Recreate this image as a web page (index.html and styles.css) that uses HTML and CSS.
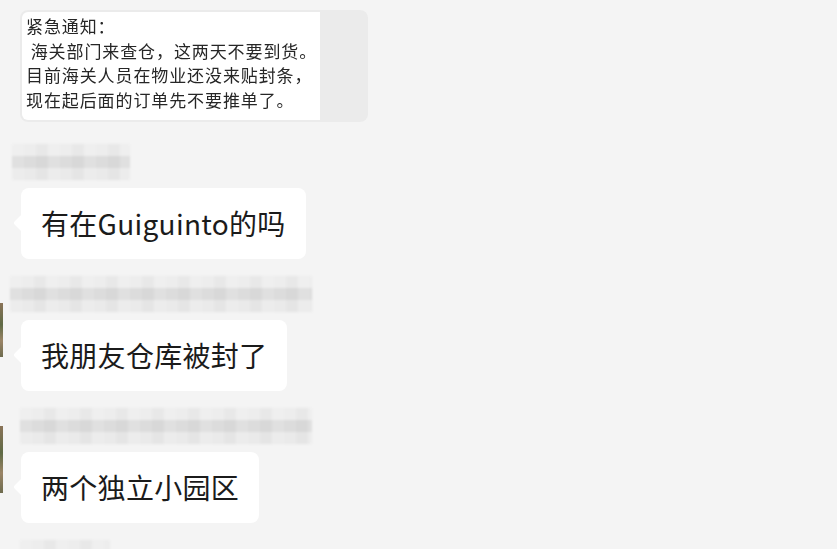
FILE: index.html
```html
<!DOCTYPE html>
<html lang="zh-CN">
<head>
  <meta charset="UTF-8" />
  <title>聊天记录</title>
  <link rel="stylesheet" href="styles.css">
</head>
<body>
  <div class="chat">
    <div class="pic-msg">
      <div class="pic">
        <div class="pic-line">紧急通知：</div>
        <div class="pic-line"> 海关部门来查仓，这两天不要到货。</div>
        <div class="pic-line">目前海关人员在物业还没来贴封条，</div>
        <div class="pic-line">现在起后面的订单先不要推单了。</div>
      </div>
    </div>

    <div class="msg msg-first">
      <div class="avatar avatar-none"></div>
      <div class="msg-body">
        <div class="name name-short"></div>
        <div class="bubble">有在Guiguinto的吗</div>
      </div>
    </div>

    <div class="msg">
      <div class="avatar"></div>
      <div class="msg-body">
        <div class="name name-long"></div>
        <div class="bubble">我朋友仓库被封了</div>
      </div>
    </div>

    <div class="msg">
      <div class="avatar avatar-tall"></div>
      <div class="msg-body">
        <div class="name name-long name-inset"></div>
        <div class="bubble">两个独立小园区</div>
      </div>
    </div>

    <div class="msg">
      <div class="avatar avatar-none"></div>
      <div class="msg-body">
        <div class="name name-short name-inset"></div>
      </div>
    </div>
  </div>
</body>
</html>
```

FILE: styles.css
```css
body {
  margin: 0;
  background-color: #f4f4f4;
  font-family: "Noto Sans CJK SC", "Noto Sans", sans-serif;
}
.chat {
  display: flex;
  flex-direction: column;
  padding-top: 10px;
  height: 549px;
  box-sizing: border-box;
  overflow: hidden;
}
.pic-msg {
  margin-left: 20px;
  width: 348px;
  height: 112px;
  flex-shrink: 0;
  background-color: #ebebeb;
  border-radius: 8px;
  padding: 2px;
  box-sizing: border-box;
}
.pic {
  width: 298px;
  height: 108px;
  background-color: #fff;
  border-radius: 6px 0 0 6px;
  padding: 2px 0 0 4px;
  box-sizing: border-box;
}
.pic-line {
  font-size: 17px;
  line-height: 24.5px;
  letter-spacing: 0.9px;
  color: #262626;
  white-space: pre;
  filter: blur(0.35px);
}
.msg {
  display: flex;
  flex-shrink: 0;
  margin-top: 17px;
}
.msg-first {
  margin-top: 22px;
}
.avatar {
  width: 3px;
  height: 54px;
  margin-top: 27px;
  background: linear-gradient(to bottom, #8a7358, #5f6a45 40%, #9a8466 70%, #6d6b4e);
  flex-shrink: 0;
}
.avatar-tall {
  height: 67px;
  margin-top: 18px;
}
.avatar-none {
  background: none;
}
.msg-body {
  display: flex;
  flex-direction: column;
  align-items: flex-start;
  margin-left: 7px;
}
.name {
  height: 36px;
  margin-bottom: 8px;
  background:
    repeating-linear-gradient(to right, rgba(255, 255, 255, 0.12) 0 12px, rgba(0, 0, 0, 0) 12px 24px, rgba(0, 0, 0, 0.02) 24px 36px),
    linear-gradient(to bottom, #ededed 0 12px, #dcdcdc 12px 24px, #eaeaea 24px);
  filter: blur(1px);
}
.name-short {
  width: 118px;
  margin-left: 2px;
}
.name-long {
  width: 302px;
}
.name-inset {
  margin-left: 10px;
  width: 292px;
}
.name-short.name-inset {
  width: 90px;
}
.bubble {
  position: relative;
  margin-left: 11px;
  background-color: #fff;
  border-radius: 8px;
  height: 71px;
  line-height: 71px;
  padding: 0 20px;
  font-size: 28px;
  letter-spacing: 0.3px;
  color: #1b1b1b;
  white-space: nowrap;
}
.bubble::before {
  content: "";
  position: absolute;
  left: -5px;
  top: 28px;
  width: 14px;
  height: 14px;
  background-color: #fff;
  border-radius: 2px;
  transform: rotate(45deg);
}
```
